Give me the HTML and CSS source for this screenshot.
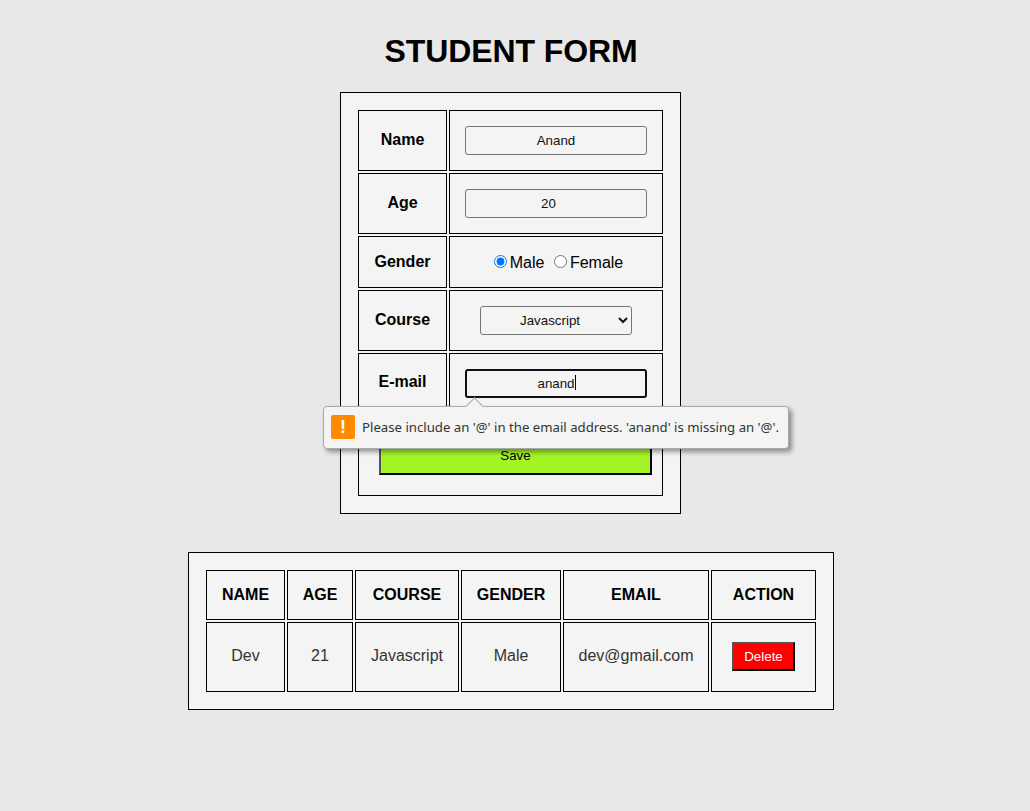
FILE: index.html
```html
<!DOCTYPE html>
<html lang="en">
<head>
<meta charset="utf-8">
<title>Student Form</title>
<link rel="stylesheet" href="styles.css">
</head>
<body>
<main class="page">
  <h1 class="title">STUDENT FORM</h1>
  <form class="panel form-panel" novalidate>
    <table class="grid form-grid">
      <colgroup><col class="col-label"><col class="col-field"></colgroup>
      <tbody>
        <tr class="row-tall">
          <th>Name</th>
          <td><input class="field" type="text" value="Anand"></td>
        </tr>
        <tr class="row-tall">
          <th>Age</th>
          <td><input class="field" type="number" value="20"></td>
        </tr>
        <tr class="row-short">
          <th>Gender</th>
          <td>
            <input type="radio" name="gender" checked><label>Male</label>
            <input type="radio" name="gender"><label>Female</label>
          </td>
        </tr>
        <tr class="row-tall">
          <th>Course</th>
          <td>
            <select class="picker">
              <option>Javascript</option>
              <option>Python</option>
            </select>
          </td>
        </tr>
        <tr class="row-tall">
          <th class="label-email">E-mail</th>
          <td><input class="field field-focus" type="email" value="anand"></td>
        </tr>
        <tr class="row-save">
          <td colspan="2" class="save-cell"><button class="btn btn-save" type="button">Save</button></td>
        </tr>
      </tbody>
    </table>
  </form>

  <section class="panel list-panel">
    <table class="grid list-grid">
      <colgroup>
        <col class="c-name"><col class="c-age"><col class="c-course"><col class="c-gender"><col class="c-email"><col class="c-action">
      </colgroup>
      <thead>
        <tr class="row-head">
          <th>NAME</th><th>AGE</th><th>COURSE</th><th>GENDER</th><th>EMAIL</th><th>ACTION</th>
        </tr>
      </thead>
      <tbody>
        <tr class="row-data">
          <td>Dev</td><td>21</td><td>Javascript</td><td>Male</td><td>dev@gmail.com</td>
          <td><button class="btn btn-delete" type="button">Delete</button></td>
        </tr>
      </tbody>
    </table>
  </section>

  <span class="caret"></span>
  <div class="tip" role="tooltip">
    <span class="tip-icon">!</span>
    <span class="tip-text">Please include an '@' in the email address. 'anand' is missing an '@'.</span>
  </div>
</main>
</body>
</html>
```

FILE: styles.css
```css
* {
  box-sizing: border-box;
}

html,
body {
  margin: 0;
  padding: 0;
  background: #e8e8e8;
}

body {
  font-family: "Liberation Sans", Arial, sans-serif;
  color: #000;
}

.page {
  position: relative;
  width: 1022px;
  height: 811px;
  padding-top: 33px;
  display: flex;
  flex-direction: column;
  align-items: center;
}

.title {
  margin: 0 0 22px;
  font-size: 32px;
  line-height: 37px;
  font-weight: 700;
  letter-spacing: -0.1px;
}

.panel {
  background: #f4f4f4;
  border: 1px solid #000;
  padding: 15px;
}

.form-panel {
  width: 341px;
  margin-right: 1px;
  margin-bottom: 38px;
}

.list-panel {
  width: 646px;
}

.grid {
  border-collapse: separate;
  border-spacing: 2px;
  table-layout: fixed;
  width: 100%;
}

.grid th,
.grid td {
  border: 1px solid #000;
  padding: 0;
  text-align: center;
  vertical-align: middle;
  font-size: 16px;
}

.col-label { width: 89px; }
.col-field { width: 214px; }

.row-tall { height: 61px; }
.row-short { height: 52px; }
.row-save { height: 79px; }

.grid .row-tall th {
  padding-bottom: 2px;
}

.grid .row-tall th.label-email {
  padding-bottom: 4px;
}

.field {
  display: inline-block;
  width: 182px;
  height: 29px;
  padding: 1px 2px;
  border: 1px solid #767676;
  border-radius: 3px;
  background: #f4f4f4;
  color: #111;
  font: 13.33px "Liberation Sans", Arial, sans-serif;
  text-align: center;
  vertical-align: middle;
}

.field-focus {
  border: 2px solid #101010;
}

.picker {
  display: inline-block;
  width: 152px;
  height: 29px;
  border: 1px solid #767676;
  border-radius: 3px;
  background-color: #f4f4f4;
  color: #111;
  font: 13.33px "Liberation Sans", Arial, sans-serif;
  text-align: center;
  vertical-align: middle;
}

.grid td.save-cell {
  padding: 18px 10px 20px 20px;
}

.btn {
  font: 13.33px "Liberation Sans", Arial, sans-serif;
  border: 2px outset #000;
  padding: 0;
}

.btn-save {
  display: block;
  width: 273px;
  height: 40px;
  background: #a4f528;
  color: #000;
}

.c-name { width: 79px; }
.c-age { width: 66px; }
.c-course { width: 104px; }
.c-gender { width: 100px; }
.c-email { width: 146px; }
.c-action { width: 105px; }

.row-head { height: 50px; }
.row-data { height: 70px; }

.list-grid td {
  color: #333;
  padding-bottom: 2px;
}

.btn-delete {
  width: 63px;
  height: 29px;
  background: #f00;
  color: #fff;
  vertical-align: middle;
}

.caret {
  position: absolute;
  left: 575px;
  top: 375px;
  width: 1px;
  height: 15px;
  background: #000;
}

.tip {
  position: absolute;
  left: 323px;
  top: 406px;
  width: 466px;
  height: 43px;
  display: flex;
  align-items: center;
  gap: 7px;
  padding-left: 7px;
  padding-bottom: 2px;
  background: #f4f4f4;
  border: 1px solid #aaa;
  border-radius: 4px;
  box-shadow: 3px 3px 5px rgba(0, 0, 0, 0.4);
}

.tip::before {
  content: "";
  position: absolute;
  left: 144px;
  top: -7px;
  width: 12px;
  height: 12px;
  background: #f4f4f4;
  border-top: 1px solid #aaa;
  border-left: 1px solid #aaa;
  transform: rotate(45deg);
}

.tip-icon {
  flex: none;
  width: 24px;
  height: 24px;
  background: #ff8a00;
  border-radius: 2px;
  color: #fff;
  font: 700 18px/24px "Liberation Sans", Arial, sans-serif;
  text-align: center;
}

.tip-text {
  font: 13.2px "Noto Sans", sans-serif;
  color: #333;
  white-space: nowrap;
}
```
